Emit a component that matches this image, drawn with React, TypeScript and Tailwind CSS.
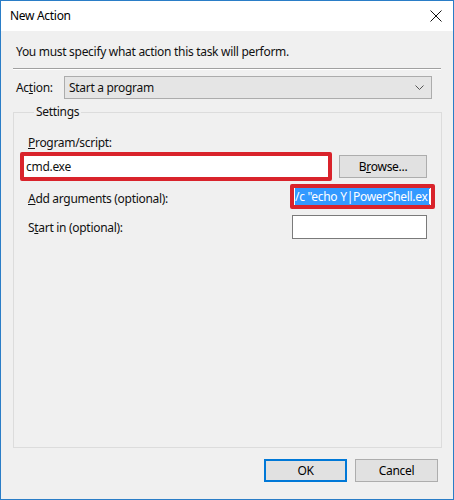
import React from "react";

const font = { fontFamily: '"Noto Sans", "Liberation Sans", sans-serif' };

function WinButton({ children, primary, wide }: { children: React.ReactNode; primary?: boolean; wide?: boolean }) {
  const w = wide ? "w-[88px]" : "w-[83px]";
  return (
    <button
      className={
        primary
          ? `flex h-[23px] ${w} items-center justify-center border-2 border-[#0078d7] bg-[#e1e1e1] text-[12px] text-black`
          : `flex h-[23px] ${w} items-center justify-center border border-[#adadad] bg-[#e1e1e1] text-[12px] text-black`
      }
    >
      {children}
    </button>
  );
}

export default function App() {
  return (
    <div
      style={font}
      className="flex h-[500px] w-[454px] flex-col border border-[#2a7dc7] bg-[#f0f0f0] text-[12px] leading-[18px] tracking-[-0.3px] text-[#111]"
    >
      {/* title bar */}
      <div className="flex h-[30px] shrink-0 items-center justify-between bg-white pl-[9px] pr-[9px]">
        <span className="text-[12px] text-black">New Action</span>
        <svg width="12" height="12" viewBox="0 0 12 12" className="mr-[2px]">
          <path d="M0.5 0.5 L11.5 11.5 M11.5 0.5 L0.5 11.5" stroke="#111" strokeWidth="1" fill="none" />
        </svg>
      </div>

      <div className="flex flex-1 flex-col px-[12px]">
        <div className="mt-[12px] pl-[3px]">You must specify what action this task will perform.</div>
        <div className="mt-[7px] h-px bg-[#a0a0a0]" />
        <div className="h-px bg-white" />

        {/* action row */}
        <div className="mt-[6px] flex items-center">
          <span className="w-[51px] pl-[3px]">
            Ac<u>t</u>ion:
          </span>
          <div className="flex h-[23px] w-[368px] items-center justify-between border border-[#acacac] bg-[#e5e5e5] pl-[4px] pr-[7px]">
            <span>Start a program</span>
            <svg width="9" height="6" viewBox="0 0 9 6">
              <path d="M0.5 0.5 L4.5 4.5 L8.5 0.5" stroke="#555" strokeWidth="1" fill="none" />
            </svg>
          </div>
        </div>

        {/* settings group */}
        <fieldset className="mt-[4px] h-[345px] w-[428px] border border-[#dcdcdc] px-[14px]">
          <legend className="ml-[6px] px-[2px] leading-[18px]">Settings</legend>

          <div className="mt-[13px]">
            <u>P</u>rogram/script:
          </div>
          <div className="flex items-center">
            <div className="-ml-[8px] flex h-[29px] w-[312px] items-center rounded-[2px] border-[4px] border-[#d9232b] bg-white pl-[2px]">
              cmd.exe
            </div>
            <div className="ml-[7px]">
              <WinButton wide>
                B<u>r</u>owse...
              </WinButton>
            </div>
          </div>

          <div className="mt-[3px] flex items-start justify-between">
            <span className="mt-[6px]">
              <u>A</u>dd arguments (optional):
            </span>
            <div className="-mr-[8px] flex h-[25px] w-[145px] items-center overflow-hidden rounded-[2px] border-[4px] border-[#d9232b] bg-white px-[1px]">
              <div className="flex h-[17px] w-full items-center overflow-hidden bg-[#3399ff]">
                <span className="whitespace-nowrap leading-[17px] text-white">/c "echo Y|PowerShell.ex</span>
                <span className="ml-[1px] h-[15px] w-px shrink-0 bg-white" />
              </div>
            </div>
          </div>

          <div className="mt-[6px] flex items-center justify-between">
            <span className="mt-[2px]">
              S<u>t</u>art in (optional):
            </span>
            <div className="h-[24px] w-[135px] border border-[#7a7a7a] bg-white" />
          </div>
        </fieldset>

        <div className="mt-[11px] flex justify-end gap-[8px] pr-[3px]">
          <WinButton primary>OK</WinButton>
          <WinButton>Cancel</WinButton>
        </div>
      </div>
    </div>
  );
}
